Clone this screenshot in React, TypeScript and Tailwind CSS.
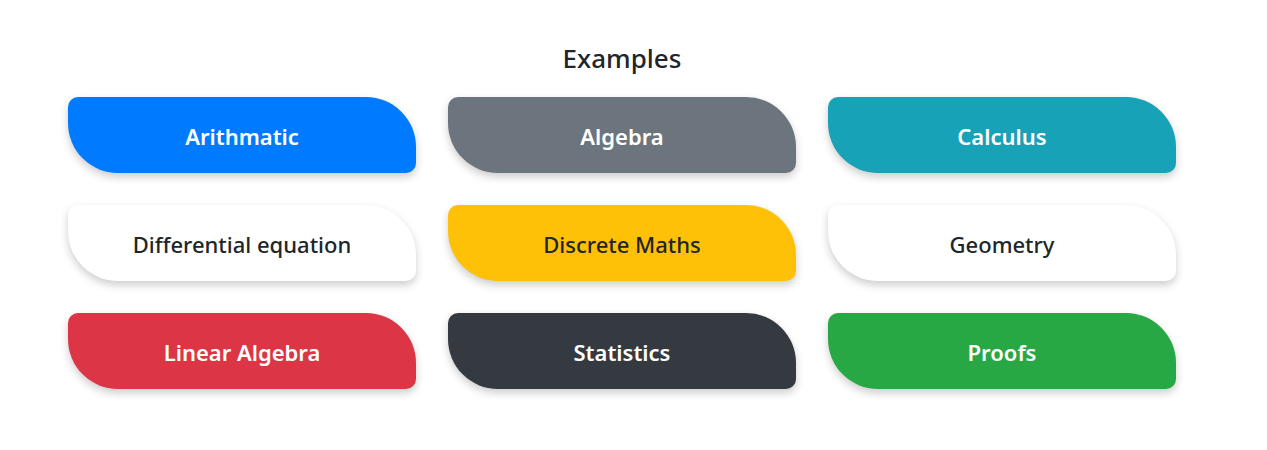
import React from "react";

const items: { label: string; cls: string }[] = [
  { label: "Arithmatic", cls: "bg-[#007bff] text-white font-semibold" },
  { label: "Algebra", cls: "bg-[#6c757d] text-white font-semibold" },
  { label: "Calculus", cls: "bg-[#17a2b8] text-white font-semibold" },
  { label: "Differential equation", cls: "bg-white text-[#212529] font-medium" },
  { label: "Discrete Maths", cls: "bg-[#ffc107] text-[#212529] font-medium" },
  { label: "Geometry", cls: "bg-white text-[#212529] font-medium" },
  { label: "Linear Algebra", cls: "bg-[#dc3545] text-white font-semibold" },
  { label: "Statistics", cls: "bg-[#343a40] text-white font-semibold" },
  { label: "Proofs", cls: "bg-[#28a745] text-white font-semibold" },
];

export default function App() {
  return (
    <div className="w-[1267px] h-[450px] bg-white font-['Noto_Sans',sans-serif]">
      <div className="w-[1108px] ml-[68px] pt-[40px]">
        <h4 className="text-center text-[26px] leading-[36px] font-medium text-[#212529] mb-[21px]">
          Examples
        </h4>
        <div className="grid grid-cols-3 gap-x-[32px] gap-y-[32px]">
          {items.map((it) => (
            <div
              key={it.label}
              className={`${it.cls} h-[76px] pt-[3px] flex items-center justify-center text-[22px] rounded-tl-[10px] rounded-tr-[50px] rounded-bl-[50px] rounded-br-[10px] shadow-[0_4px_8px_rgba(0,0,0,0.2)]`}
            >
              {it.label}
            </div>
          ))}
        </div>
      </div>
    </div>
  );
}
